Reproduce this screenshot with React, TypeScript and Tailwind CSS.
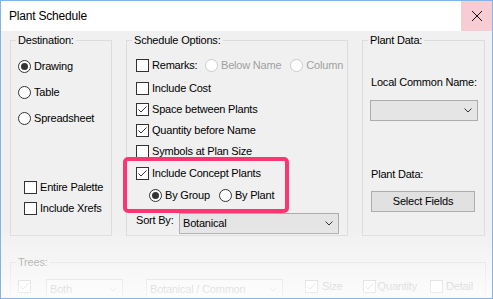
import type { ReactNode } from "react";

function CheckBox({ checked = false, disabled = false }: { checked?: boolean; disabled?: boolean }) {
  return (
    <span
      className={`flex h-[13px] w-[13px] shrink-0 items-center justify-center border bg-white ${
        disabled ? "border-[#bcbcbc]" : "border-[#333333]"
      }`}
    >
      {checked ? (
        <svg width="11" height="11" viewBox="0 0 11 11">
          <polyline
            points="1.5,5.5 4,8 9.5,2.5"
            fill="none"
            stroke={disabled ? "#bcbcbc" : "#333333"}
            strokeWidth="1"
          />
        </svg>
      ) : null}
    </span>
  );
}

function Radio({ checked = false, disabled = false }: { checked?: boolean; disabled?: boolean }) {
  return (
    <span
      className={`flex h-[13px] w-[13px] shrink-0 items-center justify-center rounded-full border bg-white ${
        disabled ? "border-[#cccccc]" : "border-[#333333]"
      }`}
    >
      {checked ? <span className="h-[7px] w-[7px] rounded-full bg-[#333333]" /> : null}
    </span>
  );
}

function Chevron({ color = "#333333" }: { color?: string }) {
  return (
    <svg width="8" height="5" viewBox="0 0 8 5" className="shrink-0">
      <polyline points="0.5,0.5 4,4 7.5,0.5" fill="none" stroke={color} strokeWidth="1" />
    </svg>
  );
}

function Dropdown({
  value,
  className,
  disabled = false,
}: {
  value?: string;
  className: string;
  disabled?: boolean;
}) {
  return (
    <div
      className={`flex h-[21px] shrink-0 items-center justify-between border pl-[3px] pr-[5px] ${
        disabled ? "border-[#cccccc] bg-[#f4f4f4] text-[#a0a0a0]" : "border-[#adadad] bg-[#e5e5e5]"
      } ${className}`}
    >
      <span className="leading-[13px]">{value}</span>
      <Chevron color={disabled ? "#bcbcbc" : "#333333"} />
    </div>
  );
}

function Group({
  label,
  className,
  children,
  muted = false,
}: {
  label: string;
  className: string;
  children: ReactNode;
  muted?: boolean;
}) {
  return (
    <div className={`flex shrink-0 flex-col border border-[#dcdcdc] ${className}`}>
      <span
        className={`-mt-[7px] ml-[5px] self-start bg-[#f0f0f0] px-[2px] leading-[13px] ${
          muted ? "text-[#8a8a8a]" : ""
        }`}
      >
        {label}
      </span>
      {children}
    </div>
  );
}

export default function App() {
  return (
    <div className="relative h-[299px] w-[493px] overflow-hidden border border-[#83b4e8] bg-[#f0f0f0] font-['Liberation_Sans',Arial,sans-serif] text-[11px] tracking-[-0.2px] text-black">
      {/* title bar */}
      <div className="flex h-[30px] items-center justify-between bg-white">
        <span className="pl-[8px] text-[12px]">Plant Schedule</span>
        <div className="flex h-full w-[31px] items-center justify-center bg-[#f7cdd3]">
          <svg width="10" height="10" viewBox="0 0 10 10">
            <line x1="0" y1="0" x2="10" y2="10" stroke="#111" strokeWidth="1" />
            <line x1="10" y1="0" x2="0" y2="10" stroke="#111" strokeWidth="1" />
          </svg>
        </div>
      </div>

      <div className="flex gap-[14px] pl-[9px] pt-[9px]">
        {/* destination */}
        <Group label="Destination:" className="h-[196px] w-[102px]">
          <div className="ml-[7px] mt-[13px] flex h-[13px] items-center gap-[3px]">
            <Radio checked />
            <span>Drawing</span>
          </div>
          <div className="ml-[7px] mt-[13px] flex h-[13px] items-center gap-[3px]">
            <Radio />
            <span>Table</span>
          </div>
          <div className="ml-[7px] mt-[13px] flex h-[13px] items-center gap-[3px]">
            <Radio />
            <span>Spreadsheet</span>
          </div>
          <div className="ml-[13px] mt-[56px] flex h-[13px] items-center gap-[3px]">
            <CheckBox />
            <span>Entire Palette</span>
          </div>
          <div className="ml-[13px] mt-[8px] flex h-[13px] items-center gap-[3px]">
            <CheckBox />
            <span>Include Xrefs</span>
          </div>
        </Group>

        {/* schedule options */}
        <Group label="Schedule Options:" className="relative h-[196px] w-[222px]">
          <div className="ml-[9px] mt-[12px] flex h-[13px] items-center">
            <CheckBox />
            <span className="ml-[3px] w-[53px]">Remarks:</span>
            <Radio disabled />
            <span className="ml-[3px] text-[#a0a0a0]">Below Name</span>
            <span className="ml-[9px]">
              <Radio disabled />
            </span>
            <span className="ml-[3px] text-[#a0a0a0]">Column</span>
          </div>
          <div className="ml-[9px] mt-[10px] flex h-[13px] items-center gap-[3px]">
            <CheckBox />
            <span>Include Cost</span>
          </div>
          <div className="ml-[9px] mt-[8px] flex h-[13px] items-center gap-[3px]">
            <CheckBox checked />
            <span>Space between Plants</span>
          </div>
          <div className="ml-[9px] mt-[8px] flex h-[13px] items-center gap-[3px]">
            <CheckBox checked />
            <span>Quantity before Name</span>
          </div>
          <div className="ml-[9px] mt-[8px] flex h-[13px] items-center gap-[3px]">
            <CheckBox />
            <span>Symbols at Plan Size</span>
          </div>
          <div className="ml-[9px] mt-[9px] flex h-[13px] items-center gap-[3px]">
            <CheckBox checked />
            <span>Include Concept Plants</span>
          </div>
          <div className="ml-[22px] mt-[9px] flex h-[13px] items-center">
            <Radio checked />
            <span className="ml-[3px]">By Group</span>
            <span className="ml-[9px]">
              <Radio />
            </span>
            <span className="ml-[3px]">By Plant</span>
          </div>
          <div className="ml-[9px] mt-[11px] flex items-start">
            <span className="mt-[1px] w-[43px] leading-[13px]">Sort By:</span>
            <Dropdown value="Botanical" className="h-[20px] w-[160px]" />
          </div>

          {/* highlight annotation */}
          <div className="absolute left-[-4px] top-[116px] h-[56px] w-[166px] rounded-[5px] border-[4px] border-[#fb3670]" />
        </Group>

        {/* plant data */}
        <Group label="Plant Data:" className="h-[196px] w-[123px]">
          <span className="ml-[8px] mt-[29px] leading-[13px]">Local Common Name:</span>
          <Dropdown className="ml-[7px] mt-[11px] w-[108px]" />
          <span className="ml-[8px] mt-[47px] leading-[13px]">Plant Data:</span>
          <div className="ml-[8px] mt-[10px] flex h-[21px] w-[104px] items-center justify-center border border-[#adadad] bg-[#e1e1e1]">
            Select Fields
          </div>
        </Group>
      </div>

      {/* trees */}
      <div className="ml-[9px] mt-[26px]">
        <Group label="Trees:" muted className="h-[60px] w-[476px]">
          <div className="ml-[7px] mt-[10px] flex items-start text-[#a0a0a0]">
            <span className="mt-[1px]">
              <CheckBox checked disabled />
            </span>
            <Dropdown value="Both" disabled className="ml-[15px] w-[77px]" />
            <Dropdown value="Botanical / Common" disabled className="ml-[23px] w-[137px]" />
            <span className="ml-[22px] mt-[1px] flex h-[13px] items-center gap-[4px]">
              <CheckBox checked disabled />
              <span>Size</span>
            </span>
            <span className="ml-[20px] mt-[1px] flex h-[13px] items-center gap-[2px]">
              <CheckBox checked disabled />
              <span>Quantity</span>
            </span>
            <span className="ml-[13px] mt-[1px] flex h-[13px] items-center gap-[3px]">
              <CheckBox disabled />
              <span>Detail</span>
            </span>
          </div>
        </Group>
      </div>

      {/* fade out */}
      <div className="pointer-events-none absolute inset-x-0 bottom-0 top-[226px] bg-linear-to-b from-white/0 to-white/80" />
    </div>
  );
}
